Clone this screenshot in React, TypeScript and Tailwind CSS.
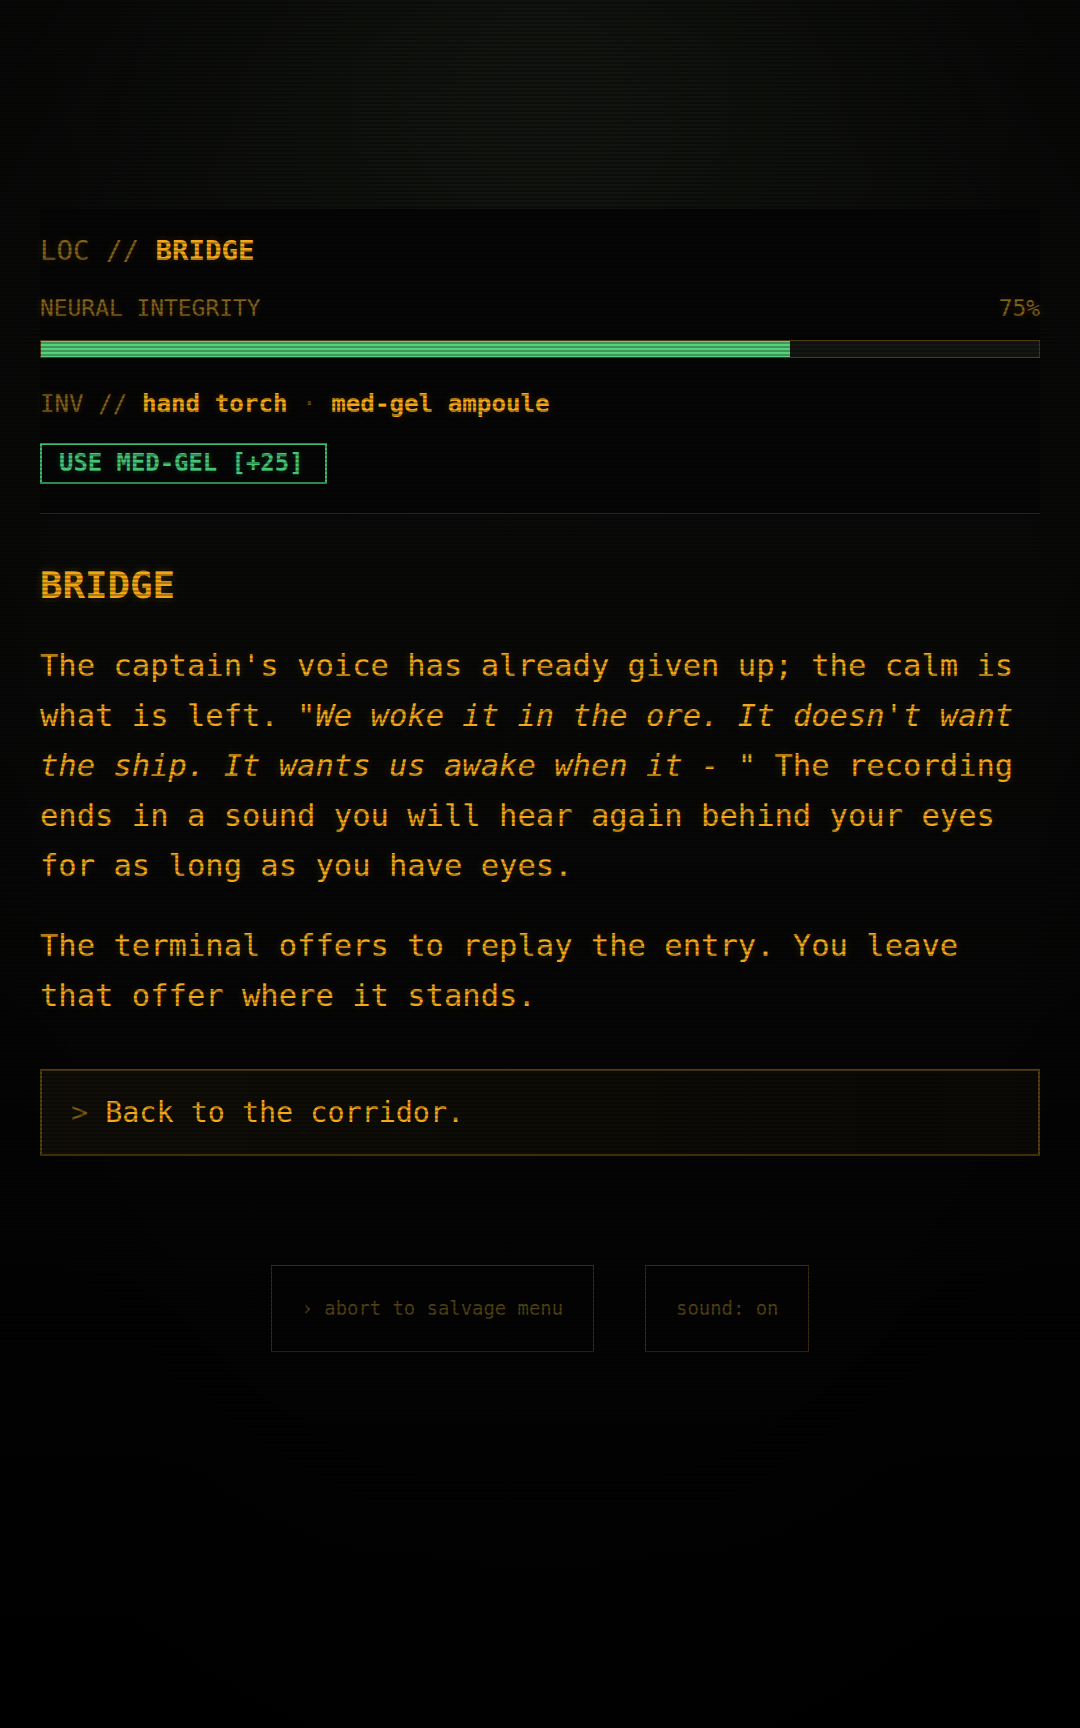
import React from 'react'

const integrity = 75
const inventory = ['hand torch', 'med-gel ampoule']

export default function App() {
  return (
    <div className="relative min-h-[1728px] overflow-hidden bg-[linear-gradient(180deg,#0b0c0a_0%,#090a08_30%,#050505_62%,#010101_100%)] font-['DejaVu_Sans_Mono','Liberation_Mono',monospace]">
      {/* soft glow at the top */}
      <div className="pointer-events-none absolute inset-0 bg-[radial-gradient(ellipse_60%_35%_at_50%_6%,rgba(26,32,24,0.45),transparent_75%)]" />
      {/* vignette */}
      <div className="pointer-events-none absolute inset-0 bg-[radial-gradient(ellipse_80%_70%_at_50%_40%,transparent_55%,rgba(0,0,0,0.65)_100%)]" />

      <main className="relative z-10 px-[40px] pt-[209px] [text-shadow:0_0_8px_rgba(240,160,20,0.22)]">
        {/* status panel */}
        <header className="border-b border-[#2f2408] bg-[#050505] pt-[26px] pb-[29px]">
          <div className="text-[27.4px] leading-[32px] text-[#85631a]">
            LOC // <span className="font-bold text-[#f5a918]">BRIDGE</span>
          </div>

          <div className="mt-[27px] flex items-center justify-between text-[22.9px] leading-[28px] text-[#86641a]">
            <span>NEURAL INTEGRITY</span>
            <span>{integrity}%</span>
          </div>

          <div className="mt-[18px] h-[18px] border border-[#4b3a12] bg-[#151713]">
            <div className="h-full bg-[#58cf7c]" style={{ width: `${integrity}%` }} />
          </div>

          <div className="mt-[32px] text-[24.2px] leading-[28px] text-[#85631a]">
            INV //{' '}
            {inventory.map((item, i) => (
              <span key={item}>
                {i > 0 && <span className="text-[#6a4f10]"> · </span>}
                <span className="font-bold text-[#f5a918]">{item}</span>
              </span>
            ))}
          </div>

          <button className="mt-[25px] flex h-[41px] items-center border-2 border-[#3dbd6c] pr-[21px] pl-[17px] text-[23.9px] leading-none font-bold text-[#45c676] [text-shadow:0_0_6px_rgba(60,190,110,0.3)]">
            USE MED-GEL [+25]
          </button>
        </header>

        {/* scene */}
        <h2 className="mt-[49px] text-[37.4px] leading-[44px] font-bold text-[#f2a614]">BRIDGE</h2>

        <p className="mt-[34px] text-[30.5px] leading-[50px] text-[#f6aa1a]">
          The captain's voice has already given up; the calm is what is left.{' '}
          <em>"We woke it in the ore. It doesn't want the ship. It wants us awake when it - "</em> The
          recording ends in a sound you will hear again behind your eyes for as long as you have eyes.
        </p>
        <p className="mt-[30px] text-[30.5px] leading-[50px] text-[#f6aa1a]">
          The terminal offers to replay the entry. You leave that offer where it stands.
        </p>

        <button className="mt-[48px] block w-full border-2 border-[#54400b] bg-[linear-gradient(90deg,#100e07,#0a0906)] pt-[22px] pb-[21px] pl-[29px] text-left text-[28.4px] leading-[40px] text-[#f6aa1a]">
          <span className="text-[#7a5a10]">&gt;</span> Back to the corridor.
        </button>

        {/* footer controls */}
        <div className="mt-[109px] flex justify-center gap-[51px] [text-shadow:none]">
          <button className="flex h-[87px] items-center border-[1.5px] border-[#3b2d08] px-[30px] text-[18.9px] text-[#54420f]">
            › abort to salvage menu
          </button>
          <button className="flex h-[87px] items-center border-[1.5px] border-[#3b2d08] px-[30px] text-[18.9px] text-[#54420f]">
            sound: on
          </button>
        </div>
      </main>

      {/* scanlines */}
      <div className="pointer-events-none absolute inset-0 z-20 bg-[repeating-linear-gradient(180deg,rgba(0,0,0,0)_0px,rgba(0,0,0,0)_2px,rgba(0,0,0,0.28)_2px,rgba(0,0,0,0.28)_4px)]" />
    </div>
  )
}
